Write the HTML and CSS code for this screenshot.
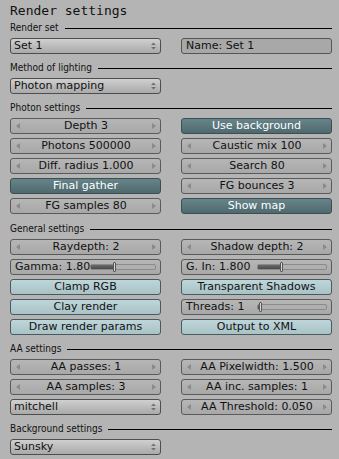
FILE: index.html
```html
<!DOCTYPE html>
<html lang="en">
  <head>
    <meta charset="UTF-8" />
    <title>Render settings</title>
    <link rel="stylesheet" href="styles.css">
  </head>
  <body>
    <div class="panel">
      <div class="title">Render settings</div>

      <div class="sec">
        <div class="hdr">Render set</div>
        <div class="grid">
          <div class="menu"><span class="txt">Set 1</span><svg class="updown" width="5" height="8" viewBox="0 0 5 8"><path d="M0 3 L2.5 0.5 L5 3 Z M0 5 L2.5 7.5 L5 5 Z" /></svg></div>
          <div class="name">Name: Set 1</div>
        </div>
      </div>

      <div class="sec">
        <div class="hdr">Method of lighting</div>
        <div class="grid">
          <div class="menu"><span class="txt">Photon mapping</span><svg class="updown" width="5" height="8" viewBox="0 0 5 8"><path d="M0 3 L2.5 0.5 L5 3 Z M0 5 L2.5 7.5 L5 5 Z" /></svg></div>
        </div>
      </div>

      <div class="sec">
        <div class="hdr">Photon settings</div>
        <div class="grid">
          <div class="num"><span class="la"></span><span class="txt">Depth 3</span><span class="ra"></span></div>
          <div class="tog on">Use background</div>
          <div class="num"><span class="la"></span><span class="txt">Photons 500000</span><span class="ra"></span></div>
          <div class="num"><span class="la"></span><span class="txt">Caustic mix 100</span><span class="ra"></span></div>
          <div class="num"><span class="la"></span><span class="txt">Diff. radius 1.000</span><span class="ra"></span></div>
          <div class="num"><span class="la"></span><span class="txt">Search 80</span><span class="ra"></span></div>
          <div class="tog on">Final gather</div>
          <div class="num"><span class="la"></span><span class="txt">FG bounces 3</span><span class="ra"></span></div>
          <div class="num"><span class="la"></span><span class="txt">FG samples 80</span><span class="ra"></span></div>
          <div class="tog on">Show map</div>
        </div>
      </div>

      <div class="sec sec-gen">
        <div class="hdr">General settings</div>
        <div class="grid">
          <div class="num"><span class="la"></span><span class="txt">Raydepth: 2</span><span class="ra"></span></div>
          <div class="num"><span class="la"></span><span class="txt">Shadow depth: 2</span><span class="ra"></span></div>
          <div class="slider">
            <span class="stxt">Gamma: 1.80</span>
            <span class="track"><span class="fill" style="width: 22px"></span><span class="knob"></span></span>
          </div>
          <div class="slider">
            <span class="stxt">G. In: 1.800</span>
            <span class="track"><span class="fill" style="width: 22px"></span><span class="knob"></span></span>
          </div>
          <div class="tog">Clamp RGB</div>
          <div class="tog">Transparent Shadows</div>
          <div class="tog">Clay render</div>
          <div class="slider">
            <span class="stxt">Threads: 1</span>
            <span class="track"><span class="fill" style="width: 1px"></span><span class="knob"></span></span>
          </div>
          <div class="tog">Draw render params</div>
          <div class="tog">Output to XML</div>
        </div>
      </div>

      <div class="sec">
        <div class="hdr">AA settings</div>
        <div class="grid">
          <div class="num"><span class="la"></span><span class="txt">AA passes: 1</span><span class="ra"></span></div>
          <div class="num"><span class="la"></span><span class="txt">AA Pixelwidth: 1.500</span><span class="ra"></span></div>
          <div class="num"><span class="la"></span><span class="txt">AA samples: 3</span><span class="ra"></span></div>
          <div class="num"><span class="la"></span><span class="txt">AA inc. samples: 1</span><span class="ra"></span></div>
          <div class="menu"><span class="txt">mitchell</span><svg class="updown" width="5" height="8" viewBox="0 0 5 8"><path d="M0 3 L2.5 0.5 L5 3 Z M0 5 L2.5 7.5 L5 5 Z" /></svg></div>
          <div class="num"><span class="la"></span><span class="txt">AA Threshold: 0.050</span><span class="ra"></span></div>
        </div>
      </div>

      <div class="sec">
        <div class="hdr">Background settings</div>
        <div class="grid">
          <div class="menu"><span class="txt">Sunsky</span><svg class="updown" width="5" height="8" viewBox="0 0 5 8"><path d="M0 3 L2.5 0.5 L5 3 Z M0 5 L2.5 7.5 L5 5 Z" /></svg></div>
        </div>
      </div>
    </div>
  </body>
</html>
```
FILE: styles.css
```css
body {
  margin: 0;
  background: #b4b4b4;
  font-family: "DejaVu Sans", sans-serif;
  color: #111;
}
.panel {
  width: 322px;
  padding-left: 10px;
}
.title {
  height: 22px;
  box-sizing: border-box;
  padding-top: 3px;
  font-family: "DejaVu Sans Mono", monospace;
  font-size: 13px;
  line-height: 16px;
  color: #111;
}
.sec {
  margin-top: 8px;
}
.sec:nth-child(2) {
  margin-top: 0;
}
.sec-gen {
  margin-top: 9px;
}
.hdr {
  height: 12px;
  display: flex;
  align-items: center;
  gap: 6px;
  margin-bottom: 4px;
  font-family: "DejaVu Sans Condensed", "DejaVu Sans", sans-serif;
  font-stretch: condensed;
  font-size: 10px;
  line-height: 12px;
}
.hdr::after {
  content: "";
  flex: 1;
  border-top: 1px solid #000;
}
.grid {
  display: grid;
  grid-template-columns: 151px 151px;
  column-gap: 20px;
  row-gap: 4px;
}
.num,
.menu,
.name,
.tog,
.slider {
  height: 16px;
  box-sizing: border-box;
  border: 1px solid #5a5a5a;
  border-radius: 3px;
  font-size: 11px;
  line-height: 14px;
  white-space: nowrap;
}
.num {
  display: flex;
  align-items: center;
  padding: 0 4px 0 5px;
  background: linear-gradient(#b6b6b6, #a8a8a8);
}
.num .txt {
  flex: 1;
  text-align: center;
}
.la,
.ra {
  width: 0;
  height: 0;
  border-top: 3px solid transparent;
  border-bottom: 3px solid transparent;
}
.la {
  border-right: 4px solid #8a8a8a;
}
.ra {
  border-left: 4px solid #8a8a8a;
}
.menu {
  display: flex;
  align-items: center;
  padding: 0 4px 0 3px;
  background: linear-gradient(#d0d0d0, #b8b8b8 60%, #aaaaaa);
  border-color: #4e4e4e;
}
.menu .txt {
  flex: 1;
}
.updown {
  fill: #707070;
}
.name {
  padding-left: 4px;
  background: #a8a8a8;
  border-color: #555;
}
.tog {
  text-align: center;
  background: linear-gradient(#bed6da, #a8c2c6);
  border-color: #4a5a5c;
}
.tog.on {
  color: #fff;
  background: linear-gradient(#66848a, #4f6a6e);
  border-color: #3e4e50;
}
.slider {
  display: flex;
  align-items: center;
  padding: 0 4px;
  background: linear-gradient(#b6b6b6, #a8a8a8);
}
.stxt {
  flex: 0 0 71px;
}
.track {
  flex: 1;
  height: 4px;
  display: flex;
  align-items: center;
  border: 1px solid #8a8a8a;
  border-radius: 2px;
  background: #b0b0b0;
}
.fill {
  height: 4px;
  background: linear-gradient(#6a6a6a, #4a4a4a);
}
.knob {
  width: 1px;
  height: 8px;
  background: #d8d8d8;
  border: 1px solid #555;
  border-radius: 1px;
}
```
